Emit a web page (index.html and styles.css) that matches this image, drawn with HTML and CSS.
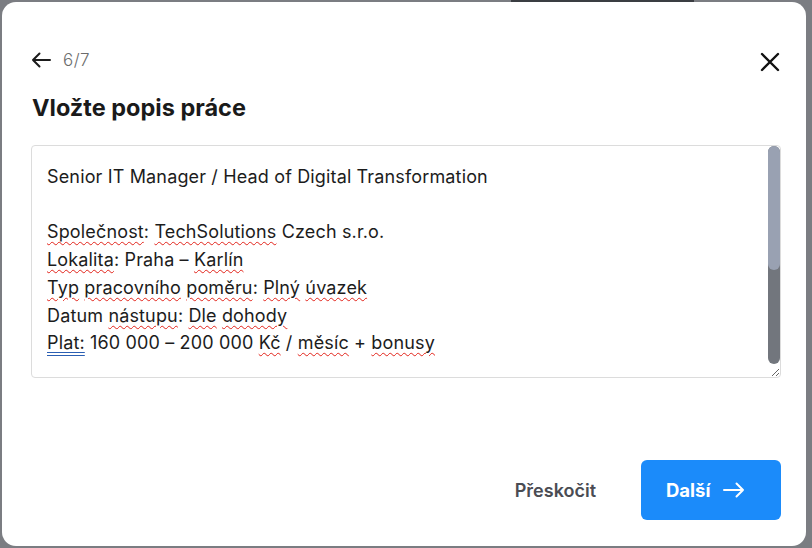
FILE: index.html
```html
<!DOCTYPE html>
<html lang="cs">
<head>
    <meta charset="UTF-8">
    <title>Vložte popis práce</title>
    <link rel="stylesheet" href="styles.css">
</head>
<body>
<div class="modal">
    <div class="head">
        <button class="back" type="button">
            <svg width="20" height="16" viewBox="0 0 20 16"><path d="M19 8H2M8.5 1.5L2 8l6.5 6.5" fill="none" stroke="#1b1b1b" stroke-width="2" stroke-linecap="round" stroke-linejoin="round"/></svg>
            <span class="step">6/7</span>
        </button>
        <button class="close" type="button">
            <svg width="20" height="20" viewBox="0 0 20 20"><path d="M2 2L18 18M18 2L2 18" fill="none" stroke="#111" stroke-width="2.4" stroke-linecap="round"/></svg>
        </button>
    </div>
    <h1 class="title">Vložte popis práce</h1>
    <div class="field-wrap">
        <div class="field">
            <p>Senior IT Manager / Head of Digital Transformation</p>
            <p>&nbsp;</p>
            <p><u>Společnost</u>: <u>TechSolutions</u> Czech s.r.o.</p>
            <p><u>Lokalita</u>: Praha – <u>Karlín</u></p>
            <p><u>Typ</u> <u>pracovního</u> <u>poměru</u>: <u>Plný</u> <u>úvazek</u></p>
            <p>Datum <u>nástupu</u>: <u>Dle</u> <u>dohody</u></p>
            <p><u class="gram">Plat:</u> 160 000 – 200 000 <u>Kč</u> / <u>měsíc</u> + <u>bonusy</u></p>
        </div>
        <span class="bar"><span class="thumb"></span></span>
    </div>
    <div class="foot">
        <button class="skip" type="button">Přeskočit</button>
        <button class="next" type="button">Další
            <svg width="22" height="16" viewBox="0 0 22 16"><path d="M1 8h19M13.5 1.5L20 8l-6.5 6.5" fill="none" stroke="#fff" stroke-width="2" stroke-linecap="round" stroke-linejoin="round"/></svg>
        </button>
    </div>
</div>
</body>
</html>
```

FILE: styles.css
```css
*{
    margin:0;
    padding:0;
    box-sizing:border-box;
    font-family: Inter, "Liberation Sans", sans-serif;
}
html,body{
    height:100%;
}
body{
    background:
        linear-gradient(#3a3d42,#3a3d42) 511px 0 / 183px 2px no-repeat,
        #7b7d82;
    padding:2px 6px 2px 2px;
}
button{
    border:0;
    background:none;
    cursor:pointer;
}
.modal{
    height:544px;
    background:#fff;
    border-radius:14px;
    padding:44px 25px 26px 29px;
    display:flex;
    flex-direction:column;
}
.head{
    height:28px;
    display:flex;
    align-items:center;
    justify-content:space-between;
}
.back{
    display:flex;
    align-items:center;
    gap:12px;
}
.step{
    font-size:17px;
    font-weight:300;
    color:#6c6c6c;
    letter-spacing:0.4px;
}
.close{
    width:24px;
    height:24px;
    display:flex;
    align-items:center;
    justify-content:center;
    margin-right:-1px;
    margin-top:4px;
}
.title{
    margin-top:18px;
    margin-left:1px;
    font-size:23.5px;
    line-height:32px;
    font-weight:700;
    color:#1a1a1a;
}
.field-wrap{
    position:relative;
    margin-top:21px;
}
.field{
    height:233px;
    border:1px solid #dcdcdc;
    border-radius:4px;
    padding:17px 15px;
    overflow:hidden;
    resize:vertical;
    font-size:18px;
    line-height:27.7px;
    color:#1c1c1c;
    letter-spacing:0.15px;
}
.field p{
    white-space:nowrap;
}
.field u{
    text-decoration:underline wavy #e2231a;
    text-decoration-thickness:1px;
    text-underline-offset:3px;
}
.field u.gram{
    text-decoration:underline double #2b5fb3;
}
.bar{
    position:absolute;
    top:1px;
    right:1px;
    width:12px;
    height:218px;
    border-radius:6px;
    background:#72767d;
}
.thumb{
    display:block;
    height:124px;
    border-radius:6px;
    background:#99a1b2;
}
.foot{
    margin-top:auto;
    display:flex;
    justify-content:flex-end;
    align-items:center;
    gap:45px;
}
.skip{
    font-size:18px;
    font-weight:600;
    color:#4a4c53;
}
.next{
    width:140px;
    height:60px;
    border-radius:6px;
    background:#1b8bfa;
    color:#fff;
    font-size:18.5px;
    font-weight:700;
    display:flex;
    align-items:center;
    gap:12px;
    padding-left:25px;
}
```
